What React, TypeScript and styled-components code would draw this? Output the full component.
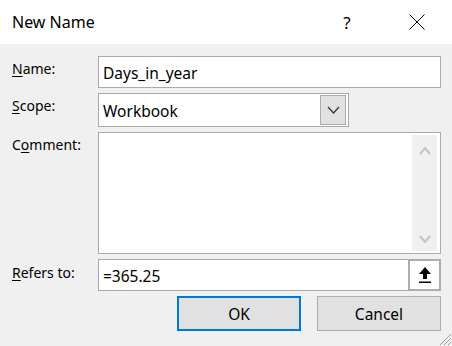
import styled, { createGlobalStyle } from "styled-components";

const Global = createGlobalStyle`
  html, body {
    margin: 0;
    padding: 0;
    background: #f0f0f0;
  }
  * {
    box-sizing: border-box;
  }
`;

const Dialog = styled.div`
  width: 452px;
  height: 346px;
  background: #f0f0f0;
  font-family: "Noto Sans", "Open Sans", sans-serif;
  font-size: 14px;
  color: #000;
  position: relative;
  overflow: hidden;
`;

const TitleBar = styled.div`
  height: 44px;
  background: #fff;
  display: flex;
  align-items: center;
  padding: 0 12px 0 12px;
`;

const Title = styled.div`
  flex: 1;
  font-size: 16px;
  padding-bottom: 1px;
`;

const TitleButton = styled.div<{ $gap?: number }>`
  width: 46px;
  height: 44px;
  margin-right: ${(p) => p.$gap ?? 0}px;
  display: flex;
  align-items: center;
  justify-content: center;
  font-size: 17px;
`;

const Form = styled.div`
  display: grid;
  grid-template-columns: 86px 343px;
  grid-template-rows: 32px 34px 122px 32px 35px;
  row-gap: 5px;
  padding: 12px 0 0 12px;
`;

const Label = styled.div<{ $top?: number }>`
  padding-top: ${(p) => p.$top ?? 3}px;
  line-height: 20px;
  u {
    text-decoration-thickness: 1px;
    text-underline-offset: 2px;
  }
`;

const TextBox = styled.div`
  border: 1px solid #ababab;
  background: #fff;
  display: flex;
  align-items: center;
  padding-left: 4px;
  font-size: 15.5px;
`;

const Value = styled.span`
  flex: 1;
  padding-top: 1px;
`;

const Select = styled(TextBox)`
  width: 251px;
  padding-right: 2px;
`;

const DropButton = styled.div`
  width: 26px;
  height: 30px;
  border: 1px solid #adadad;
  background: #e1e1e1;
  display: flex;
  align-items: center;
  justify-content: center;
`;

const CommentBox = styled.div`
  border: 1px solid #ababab;
  background: #fff;
  display: flex;
  justify-content: flex-end;
  padding: 2px 3px 2px 0;
`;

const ScrollBar = styled.div`
  width: 25px;
  background: #f0f0f0;
  display: flex;
  flex-direction: column;
  justify-content: space-between;
  align-items: center;
  padding: 12px 0 8px;
`;

const RefButton = styled.div`
  width: 33px;
  height: 32px;
  margin: -1px -1px -1px 0;
  border: 2px solid #adadad;
  background: #fff;
  display: flex;
  align-items: center;
  justify-content: center;
`;

const Buttons = styled.div`
  grid-column: 1 / span 2;
  display: flex;
  justify-content: flex-end;
  gap: 16px;
`;

const Button = styled.div<{ $primary?: boolean }>`
  width: 124px;
  height: 35px;
  background: #e1e1e1;
  border: ${(p) => (p.$primary ? "2px solid #0078d7" : "1px solid #adadad")};
  display: flex;
  align-items: center;
  justify-content: center;
  font-size: 15.5px;
`;

const Grip = styled.svg`
  position: absolute;
  right: 0;
  bottom: 0;
`;

const Chevron = ({ up, color, w = 10, thin }: { up?: boolean; color: string; w?: number; thin?: boolean }) => (
  <svg width={w + 2} height={8} viewBox={`0 0 ${w + 2} 8`}>
    <polyline
      points={up ? `1,7 ${w / 2 + 1},1 ${w + 1},7` : `1,1 ${w / 2 + 1},7 ${w + 1},1`}
      fill="none"
      stroke={color}
      strokeWidth={thin ? 1.2 : 2}
    />
  </svg>
);

export default function App() {
  return (
    <Dialog>
      <Global />
      <TitleBar>
        <Title>New Name</Title>
        <TitleButton $gap={24}>?</TitleButton>
        <TitleButton>
          <svg width="16" height="16" viewBox="0 0 16 16">
            <path d="M0.5 0.5 L15.5 15.5 M15.5 0.5 L0.5 15.5" stroke="#000" strokeWidth="1" />
          </svg>
        </TitleButton>
      </TitleBar>
      <Form>
        <Label>
          <u>N</u>ame:
        </Label>
        <TextBox>
          <Value>Days_in_year</Value>
        </TextBox>

        <Label>
          <u>S</u>cope:
        </Label>
        <Select>
          <Value>Workbook</Value>
          <DropButton>
            <Chevron color="#333" w={11} thin />
          </DropButton>
        </Select>

        <Label>
          C<u>o</u>mment:
        </Label>
        <CommentBox>
          <ScrollBar>
            <Chevron up color="#c4c4c4" />
            <Chevron color="#c4c4c4" />
          </ScrollBar>
        </CommentBox>

        <Label $top={4}>
          <u>R</u>efers to:
        </Label>
        <TextBox>
          <Value>=365.25</Value>
          <RefButton>
            <svg width="14" height="18" viewBox="0 0 14 18">
              <path d="M7 1 L13 8 H9 V13 H5 V8 H1 Z" fill="#000" />
              <rect x="1" y="15.5" width="12" height="1.5" fill="#000" />
            </svg>
          </RefButton>
        </TextBox>

        <Buttons>
          <Button $primary>OK</Button>
          <Button>Cancel</Button>
        </Buttons>
      </Form>
      <Grip width="14" height="14" viewBox="0 0 14 14">
        <path d="M13 2 L2 13 M13 6 L6 13 M13 10 L10 13" stroke="#a0a0a0" strokeWidth="1" />
      </Grip>
    </Dialog>
  );
}
